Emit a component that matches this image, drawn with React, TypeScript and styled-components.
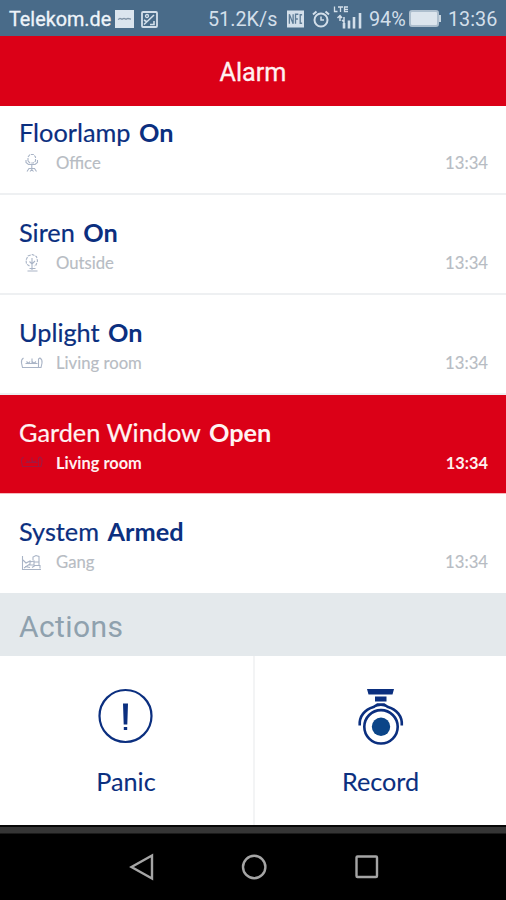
import React from "react";
import styled, { createGlobalStyle } from "styled-components";

const NAVY = "#0b2f7f";
const RED = "#db0017";

const GlobalStyle = createGlobalStyle`
  * { box-sizing: border-box; }
  body { margin: 0; background: #fff; overflow: hidden; }
`;

const Screen = styled.div`
  width: 506px;
  height: 900px;
  display: flex;
  flex-direction: column;
  background: #fff;
  font-family: Lato, sans-serif;
`;

const StatusBar = styled.header`
  height: 36px;
  flex: none;
  padding: 3px 8px 0 9px;
  display: flex;
  align-items: center;
  background: #496b89;
  color: #d3dfea;
  font-family: Roboto, sans-serif;
  font-size: 19.8px;
  line-height: 33px;
  white-space: nowrap;
`;

const StatusText = styled.span<{ $w: number; $gap?: number; $strong?: boolean }>`
  flex: none;
  width: ${(p) => p.$w}px;
  margin-left: ${(p) => p.$gap ?? 0}px;
  color: ${(p) => (p.$strong ? "#eef4fa" : "inherit")};
  -webkit-text-stroke: ${(p) => (p.$strong ? "0.3px #eef4fa" : "0")};
`;

const StatusIcon = styled.svg<{ $gap?: number }>`
  display: block;
  flex: none;
  margin-left: ${(p) => p.$gap ?? 0}px;
  margin-bottom: 1px;
`;

const TitleBar = styled.h1`
  height: 70px;
  flex: none;
  margin: 0;
  padding-top: 2px;
  display: flex;
  align-items: center;
  justify-content: center;
  background: ${RED};
  color: #fff1f1;
  font: 400 25.2px Roboto, sans-serif;
  -webkit-text-stroke: 0.3px #fff1f1;
`;

const EventList = styled.ul`
  height: 487px;
  flex: none;
  margin: 0;
  padding: 0;
  list-style: none;
  overflow: hidden;
  display: flex;
  flex-direction: column;
  justify-content: flex-end;
`;

const EventRow = styled.li<{ $alert?: boolean; $h: number }>`
  height: ${(p) => p.$h}px;
  flex: none;
  padding: 22px 18px 0 19px;
  border-bottom: ${(p) => (p.$alert ? "1px solid #f7b9bd" : "2px solid #eef0f2")};
  background: ${(p) => (p.$alert ? RED : "#fff")};
  color: ${(p) => (p.$alert ? "#fff3f2" : NAVY)};
  &:last-child { border-bottom: 0; }
`;

const EventTitle = styled.div`
  font-size: 25.3px;
  line-height: 31px;
  white-space: pre;
  -webkit-text-stroke: 0.2px currentColor;
  b { font-weight: 700; margin-left: 2px; -webkit-text-stroke: 0; }
`;

const EventMeta = styled.div<{ $alert?: boolean }>`
  display: flex;
  align-items: center;
  height: 28px;
  padding-top: ${(p) => (p.$alert ? 0 : 1)}px;
  font-size: ${(p) => (p.$alert ? 16.4 : 16.7)}px;
  color: ${(p) => (p.$alert ? "#fff0ef" : "#b7bcc3")};
  font-weight: ${(p) => (p.$alert ? 700 : 400)};
  -webkit-text-stroke: ${(p) => (p.$alert ? 0 : 0.15)}px currentColor;
`;

const RoomIcon = styled.svg<{ $alert?: boolean }>`
  display: block;
  width: 25px;
  height: 20px;
  margin-right: 12px;
  fill: none;
  stroke: ${(p) => (p.$alert ? "#a21741" : "#a9b4c6")};
  stroke-width: 1.1;
`;

const Time = styled.time`
  margin-left: auto;
`;

const SectionTitle = styled.h2`
  height: 63px;
  flex: none;
  margin: 0;
  padding: 4px 0 0 19px;
  display: flex;
  align-items: center;
  background: #e4e9ec;
  color: #8fa1ae;
  font: 400 30px Roboto, sans-serif;
  letter-spacing: 0.4px;
`;

const Actions = styled.div`
  height: 169px;
  flex: none;
  display: grid;
  grid-template-columns: 255px 251px;
`;

const Action = styled.button`
  padding: 31px 0 0;
  border: 0;
  background: none;
  display: flex;
  flex-direction: column;
  align-items: center;
  justify-content: flex-start;
  color: ${NAVY};
  font: 400 25.2px/32px Lato, sans-serif;
  -webkit-text-stroke: 0.1px currentColor;
  &:first-child { border-right: 2px solid #f3f4f5; padding-right: 1px; }
  svg { display: block; margin-bottom: 20px; }
`;

const NavBar = styled.nav`
  height: 75px;
  flex: none;
  display: flex;
  align-items: center;
  padding: 6px 0 0 129px;
  gap: 86px;
  border-top: 2px solid #070707;
  background: linear-gradient(#353535 0 6px, #000 7px);
  svg { display: block; fill: none; stroke: #a5a5a5; stroke-width: 2.4; }
`;

type RoomKind = "office" | "outside" | "living" | "gang";

const roomShapes: Record<RoomKind, React.ReactNode> = {
  office: (
    <>
      <path d="M9 8V4l2-2.500h3.500l2 2.500v4l-2 2H11z" strokeDasharray="3 1" />
      <path d="M7 7v2.500l2.500 2h6.500l2.500-2V7M12.800 11.500V15M8 18.500l2-3h5.500l2 3M11 18.500l1.800-2 1.700 2" />
    </>
  ),
  outside: (
    <>
      <path d="M10.500 13 7.500 11 7 7l2-4 4.500-1.500 4 2L18.500 8 17 12l-2 1" strokeDasharray="3 1" />
      <path d="M13 5v12M10.500 8.500 13 11l3-3M8.500 18h10M10.500 15.500h6" />
    </>
  ),
  living: (
    <>
      <path d="M4.500 5Q2 6.500 2.500 10l1 4.500h18.500l1-4.500q.5-3.500-2-5l-1.500 1v8" />
      <path d="M6.500 10.500h12M7.500 8.500l2 2 1.500-2M13 5.500v5M13 8.500l2 2 2-2" />
    </>
  ),
  gang: (
    <>
      <path d="M3.500 4v13.500H22M4 8l3 3 4-2v3l-6 4M11 10l4-1v4H9M14 8V5l3-1.500 3 1V10h-5M6 14.500l5 1M13 15.500l3-2h5v3M20 10v4" />
    </>
  ),
};

const events: {
  name: string; state: string; room: string; kind: RoomKind; h: number; alert?: boolean;
}[] = [
  { name: "Floorlamp", state: "On", room: "Office", kind: "office", h: 100 },
  { name: "Siren", state: "On", room: "Outside", kind: "outside", h: 100 },
  { name: "Uplight", state: "On", room: "Living room", kind: "living", h: 100 },
  { name: "Garden Window", state: "Open", room: "Living room", kind: "living", h: 99, alert: true },
  { name: "System", state: "Armed", room: "Gang", kind: "gang", h: 99 },
];

export default function App() {
  return (
    <Screen>
      <GlobalStyle />
      <StatusBar>
        <StatusText $w={103} $strong>Telekom.de</StatusText>
        <StatusIcon $gap={3} width="19" height="18" viewBox="0 0 19 18">
          <rect width="19" height="18" fill="#dbe5ee" />
          <path d="M3 9.500 5 8.500l2 .7 2-.7 2 .7 2-.7 3 .7" stroke="#8093a5" strokeWidth="1.300" fill="none" />
        </StatusIcon>
        <StatusIcon $gap={7} width="17" height="17" viewBox="0 0 17 17" fill="none" stroke="#d3dfea">
          <rect x="1" y="1" width="15" height="15" rx="1" strokeWidth="1.800" />
          <circle cx="6" cy="5" r="1.500" strokeWidth="1.300" />
          <path d="M3 13.500 13 4M3 9l3 2M9 13.500h4V10" strokeWidth="1.600" />
        </StatusIcon>
        <StatusText $w={71} $gap={50}>51.2K/s</StatusText>
        <StatusIcon $gap={8} width="17" height="18" viewBox="0 0 18 18">
          <rect width="18" height="18" fill="#d3dfea" />
          <path d="M2.500 14V4l4 10V4M9 14V4h3M9 9h2.500M16 4.500h-2v9h2" stroke="#5e7c97" strokeWidth="1.400" fill="none" />
        </StatusIcon>
        <StatusIcon $gap={8} width="18" height="18" viewBox="0 0 18 18" fill="none" stroke="#d3dfea" strokeWidth="2">
          <circle cx="9" cy="10" r="6.500" />
          <path d="M1 4.500 4.500 1.500M17 4.500l-3.500-3" />
          <path d="M9 6.500V10h3" strokeWidth="1.500" />
        </StatusIcon>
        <StatusIcon $gap={3} width="30" height="26" viewBox="0 0 30 26" fill="none" stroke="#d3dfea">
          <path d="M1.500 .5v5h3M5 1h5M7.500 1v5M15 1h-3.500v4.500H15M11.500 3.300H15" strokeWidth="1.300" />
          <path d="M7 10v5M4.500 12 7 9.500 9 12M11 17v-6M9 14l2 2" strokeWidth="1.500" />
          <path d="M11 17v5.500M16 14.500v8M21 11v11.500M27 7v15.500" strokeWidth="2.600" />
        </StatusIcon>
        <StatusText $w={38} $gap={6}>94%</StatusText>
        <StatusIcon $gap={2} width="32" height="18" viewBox="0 0 32 18">
          <rect x="1" y="1" width="28" height="15" rx="2" fill="#dce5ed" stroke="#aebfce" strokeWidth="2" />
          <path d="M31 5v7" stroke="#c8d5e0" strokeWidth="2" />
        </StatusIcon>
        <StatusText $w={50} $gap={7}>13:36</StatusText>
      </StatusBar>
      <TitleBar>Alarm</TitleBar>
      <EventList>
        {events.map((e) => (
          <EventRow key={e.name} $alert={e.alert} $h={e.h}>
            <EventTitle>{e.name} <b>{e.state}</b></EventTitle>
            <EventMeta $alert={e.alert}>
              <RoomIcon $alert={e.alert} viewBox="0 0 25 20">{roomShapes[e.kind]}</RoomIcon>
              <span>{e.room}</span>
              <Time>13:34</Time>
            </EventMeta>
          </EventRow>
        ))}
      </EventList>
      <SectionTitle>Actions</SectionTitle>
      <Actions>
        <Action>
          <svg width="58" height="58" viewBox="0 0 58 58" fill="none" stroke={NAVY}>
            <circle cx="28.500" cy="29" r="26" strokeWidth="2.200" />
            <path d="M26 16.500h5l-.7 21h-3.600zM26.800 40h3.400v3h-3.400z" fill={NAVY} stroke="none" />
          </svg>
          Panic
        </Action>
        <Action>
          <svg width="58" height="58" viewBox="0 0 58 58" fill="none" stroke={NAVY}>
            <path d="M15 2h27l-1.500 5.500h-24zM23 9.500h11.500v5H23z" fill={NAVY} stroke="none" />
            <path d="M7.700 38.500C7 29 13 22.500 21.500 20L25.500 17.500H32l4 2.500C44.500 22.500 50.500 29 49.800 38.500" strokeWidth="2.600" />
            <path d="M19 21.500 25.500 17H32l6.500 4.500Q29 16.500 19 21.500z" fill={NAVY} stroke="none" />
            <circle cx="29" cy="39.800" r="16.700" strokeWidth="2.600" />
            <circle cx="29" cy="39.800" r="9.200" fill="#0b4588" stroke="none" />
          </svg>
          Record
        </Action>
      </Actions>
      <NavBar>
        <svg width="26" height="28" viewBox="0 0 26 28"><path d="M23 2.500v23L2.500 14z" /></svg>
        <svg width="26" height="28" viewBox="0 0 26 28"><circle cx="13.200" cy="14" r="11.200" /></svg>
        <svg width="26" height="28" viewBox="0 0 26 28"><rect x="3.500" y="3.500" width="20.500" height="20.500" rx="1" /></svg>
      </NavBar>
    </Screen>
  );
}
